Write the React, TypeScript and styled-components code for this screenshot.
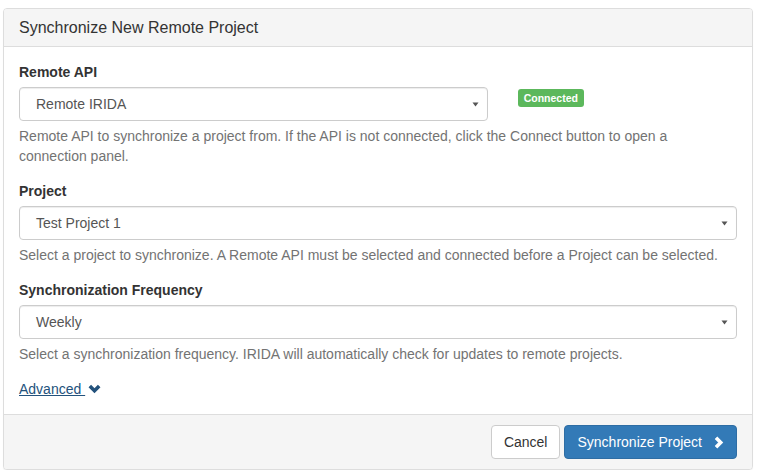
import React from "react";
import styled, { createGlobalStyle } from "styled-components";

const Global = createGlobalStyle`
  html, body { margin: 0; padding: 0; background: #fff; }
  body {
    font-family: "Liberation Sans", Arial, Helvetica, sans-serif;
    font-size: 14px;
    line-height: 1.42857143;
    color: #333;
  }
  * { box-sizing: border-box; }
`;

const Page = styled.div`
  padding: 8px 0 0 3px;
`;

const Panel = styled.div`
  width: 750px;
  background: #fff;
  border: 1px solid #ddd;
  border-radius: 4px;
  box-shadow: 0 1px 1px rgba(0, 0, 0, 0.05);
  overflow: hidden;
`;

const PanelHeading = styled.div`
  padding: 10px 15px;
  background: #f5f5f5;
  border-bottom: 1px solid #ddd;
`;

const PanelTitle = styled.h3`
  margin: 0;
  font-size: 16px;
  font-weight: 400;
  line-height: 17px;
  color: #333;
`;

const PanelBody = styled.div`
  padding: 15px;
`;

const FormGroup = styled.div`
  margin-bottom: 15px;
`;

const Row = styled.div`
  display: grid;
  grid-template-columns: 2fr 1fr;
  margin: 0 -15px;
`;

const Col = styled.div`
  padding: 0 15px;
`;

const Label = styled.label`
  display: block;
  margin-bottom: 5px;
  font-weight: 700;
`;

const Select = styled.div`
  position: relative;
  height: 34px;
  padding: 6px 30px 6px 16px;
  border: 1px solid #ccc;
  border-radius: 4px;
  background: #fff;
  color: #555;
  box-shadow: inset 0 1px 1px rgba(0, 0, 0, 0.075);
`;

const Caret = styled.svg`
  position: absolute;
  right: 8px;
  top: 14px;
`;

const HelpBlock = styled.p`
  margin: 5px 0 0;
  color: #737373;
`;

const StatusLabel = styled.span<{ $color: string }>`
  display: inline-block;
  margin-top: 27px;
  padding: 3px 6px 3px;
  font-size: 10.5px;
  font-weight: 700;
  line-height: 12px;
  color: #fff;
  background: ${(p) => p.$color};
  border-radius: 3px;
  vertical-align: top;
`;

const AdvancedLink = styled.a`
  display: inline-flex;
  align-items: center;
  gap: 3px;
  color: #23527c;
  cursor: pointer;
`;

const LinkText = styled.span`
  text-decoration: underline;
`;

const PanelFooter = styled.div`
  display: flex;
  justify-content: flex-end;
  gap: 4px;
  padding: 10px 15px;
  background: #f5f5f5;
  border-top: 1px solid #ddd;
`;

const Button = styled.button<{ $primary?: boolean }>`
  display: inline-flex;
  align-items: center;
  gap: 12px;
  height: 34px;
  padding: 6px 12px;
  font-family: inherit;
  font-size: 14px;
  line-height: 1.42857143;
  border-radius: 4px;
  border: 1px solid ${(p) => (p.$primary ? "#2e6da4" : "#ccc")};
  background: ${(p) => (p.$primary ? "#337ab7" : "#fff")};
  color: ${(p) => (p.$primary ? "#fff" : "#333")};
  cursor: pointer;
`;

const CaretDown = () => (
  <Caret width="7" height="5" viewBox="0 0 7 5">
    <polygon points="0.5,0.5 6.5,0.5 3.5,4.5" fill="#555" />
  </Caret>
);

const ChevronDown = () => (
  <svg width="13" height="10" viewBox="0 0 13 10">
    <polyline
      points="1.8,2 6.5,6.7 11.2,2"
      fill="none"
      stroke="#23527c"
      strokeWidth="3.6"
      strokeLinecap="butt"
      strokeLinejoin="miter"
    />
  </svg>
);

const ChevronRight = () => (
  <svg width="10" height="13" viewBox="0 0 10 13">
    <polyline
      points="2,1.8 6.7,6.5 2,11.2"
      fill="none"
      stroke="#fff"
      strokeWidth="3.6"
      strokeLinecap="butt"
      strokeLinejoin="miter"
    />
  </svg>
);

export default function App() {
  return (
    <>
      <Global />
      <Page>
        <Panel>
          <PanelHeading>
            <PanelTitle>Synchronize New Remote Project</PanelTitle>
          </PanelHeading>
          <PanelBody>
            <FormGroup>
              <Row>
                <Col>
                  <Label>Remote API</Label>
                  <Select>
                    Remote IRIDA
                    <CaretDown />
                  </Select>
                </Col>
                <Col>
                  <StatusLabel $color="#5cb85c">Connected</StatusLabel>
                </Col>
              </Row>
              <HelpBlock>
                Remote API to synchronize a project from. If the API is not connected, click the
                Connect button to open a connection panel.
              </HelpBlock>
            </FormGroup>
            <FormGroup>
              <Label>Project</Label>
              <Select>
                Test Project 1
                <CaretDown />
              </Select>
              <HelpBlock>
                Select a project to synchronize. A Remote API must be selected and connected before a
                Project can be selected.
              </HelpBlock>
            </FormGroup>
            <FormGroup>
              <Label>Synchronization Frequency</Label>
              <Select>
                Weekly
                <CaretDown />
              </Select>
              <HelpBlock>
                Select a synchronization frequency. IRIDA will automatically check for updates to
                remote projects.
              </HelpBlock>
            </FormGroup>
            <AdvancedLink>
              <LinkText>Advanced&nbsp;</LinkText>
              <ChevronDown />
            </AdvancedLink>
          </PanelBody>
          <PanelFooter>
            <Button>Cancel</Button>
            <Button $primary>
              Synchronize Project
              <ChevronRight />
            </Button>
          </PanelFooter>
        </Panel>
      </Page>
    </>
  );
}
